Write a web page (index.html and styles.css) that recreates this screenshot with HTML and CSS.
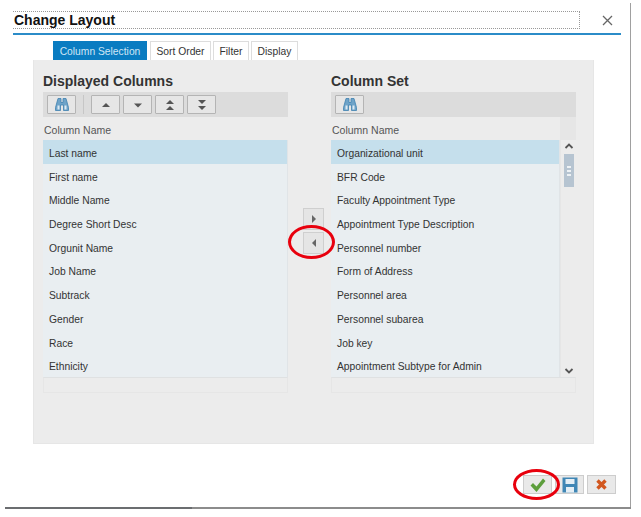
FILE: index.html
```html
<!DOCTYPE html>
<html>

<head>
    <title>Change Layout</title>
    <meta charset="UTF-8">
    <link rel="stylesheet" href="styles.css">
</head>

<body>
    <div class="window">
        <div class="dialog-header">
            <div class="dialog-title">Change Layout</div>
            <svg class="close" width="11" height="11" viewBox="0 0 11 11">
                <path d="M1 1l9 9M10 1l-9 9" stroke="#666" stroke-width="1.3" fill="none" />
            </svg>
        </div>

        <div class="tabs">
            <div class="tab active">Column Selection</div>
            <div class="tab tab-sort">Sort Order</div>
            <div class="tab tab-filter">Filter</div>
            <div class="tab tab-display">Display</div>
        </div>

        <div class="panel">
            <div class="column-box">
                <h2>Displayed Columns</h2>
                <div class="toolbar">
                    <button class="tool"><svg width="14" height="15" viewBox="0 0 14 15"><use href="#binoculars" /></svg></button>
                    <span class="tool-sep"></span>
                    <button class="tool"><svg width="10" height="10" viewBox="0 0 10 10"><path d="M1 7h8L5 3z" fill="#555" /></svg></button>
                    <button class="tool"><svg width="10" height="10" viewBox="0 0 10 10"><path d="M1 3.500h8L5 7.500z" fill="#555" /></svg></button>
                    <button class="tool"><svg width="10" height="12" viewBox="0 0 10 12"><path d="M1 5h8L5 1zM1 11h8L5 7z" fill="#555" /></svg></button>
                    <button class="tool"><svg width="10" height="12" viewBox="0 0 10 12"><path d="M1 1h8L5 5zM1 7h8L5 11z" fill="#555" /></svg></button>
                </div>
                <div class="table">
                    <div class="table-main">
                        <div class="head">Column Name</div>
                        <div class="row selected">Last name</div>
                        <div class="row">First name</div>
                        <div class="row">Middle Name</div>
                        <div class="row">Degree Short Desc</div>
                        <div class="row">Orgunit Name</div>
                        <div class="row">Job Name</div>
                        <div class="row">Subtrack</div>
                        <div class="row">Gender</div>
                        <div class="row">Race</div>
                        <div class="row">Ethnicity</div>
                    </div>
                </div>
                <div class="table-foot"></div>
            </div>

            <div class="move-buttons">
                <button class="move"><svg width="8" height="10" viewBox="0 0 8 10"><path d="M2 1v8l4-4z" fill="#666" /></svg></button>
                <button class="move"><svg width="8" height="10" viewBox="0 0 8 10"><path d="M6 1v8L2 5z" fill="#666" /></svg></button>
            </div>

            <div class="column-box">
                <h2>Column Set</h2>
                <div class="toolbar">
                    <button class="tool"><svg width="14" height="15" viewBox="0 0 14 15"><use href="#binoculars" /></svg></button>
                </div>
                <div class="table">
                    <div class="table-main">
                        <div class="head">Column Name</div>
                        <div class="row selected">Organizational unit</div>
                        <div class="row">BFR Code</div>
                        <div class="row">Faculty Appointment Type</div>
                        <div class="row">Appointment Type Description</div>
                        <div class="row">Personnel number</div>
                        <div class="row">Form of Address</div>
                        <div class="row">Personnel area</div>
                        <div class="row">Personnel subarea</div>
                        <div class="row">Job key</div>
                        <div class="row">Appointment Subtype for Admin</div>
                    </div>
                    <div class="scrollbar">
                        <div class="scroll-head"></div>
                        <svg class="scroll-arrow" width="10" height="6" viewBox="0 0 10 6"><path d="M1.500 5L5 1.500 8.500 5" stroke="#555" stroke-width="1.800" fill="none" /></svg>
                        <div class="scroll-thumb"><span></span><span></span><span></span></div>
                        <svg class="scroll-arrow down" width="10" height="6" viewBox="0 0 10 6"><path d="M1.500 1L5 4.500 8.500 1" stroke="#555" stroke-width="1.800" fill="none" /></svg>
                    </div>
                </div>
                <div class="table-foot"></div>
            </div>
        </div>

        <div class="dialog-footer">
            <button class="action">
                <svg width="16" height="14" viewBox="0 0 16 14"><path d="M0.500 7.500l2.500-2.500 3.500 3.500L13 0.500l2.500 2.500L6.500 14z" fill="#5d9e3c" /></svg>
            </button>
            <button class="action">
                <svg width="16" height="16" viewBox="0 0 16 16">
                    <path d="M0.500 0.500h15v15h-15z" fill="#3f86b5" />
                    <path d="M3.500 2h9v5h-9zM4 10h8v5.500H4z" fill="#e4eef5" />
                </svg>
            </button>
            <button class="action">
                <svg width="13" height="13" viewBox="0 0 13 13"><path d="M2.500 2.500l8 8M10.500 2.500l-8 8" stroke="#d2571f" stroke-width="3.400" fill="none" /></svg>
            </button>
        </div>

        <div class="callout callout-move"></div>
        <div class="callout callout-ok"></div>
    </div>

    <svg width="0" height="0" class="defs">
        <defs>
            <g id="binoculars">
                <path d="M3 1.500h3v4h2v-4h3l2.500 9v3h-5V8h-3v5.500h-5v-3z" fill="#6ea3c8" stroke="#3f82b0" stroke-width="0.800" />
                <path d="M2.500 8.500h2v4h-2zM9.500 8.500h2v4h-2z" fill="#dce9f2" />
            </g>
        </defs>
    </svg>
</body>

</html>
```

FILE: styles.css
```css
html {
    font-size: 10.300px;
    font-family: 'Liberation Sans', Arial, sans-serif;
}

body {
    margin: 0;
    background-color: #fff;
    color: #333;
}

button {
    margin: 0;
    padding: 0;
    font: inherit;
    display: flex;
    align-items: center;
    justify-content: center;
}

.defs {
    position: absolute;
}

.window {
    position: relative;
    box-sizing: border-box;
    width: 631px;
    height: 509px;
    padding: 11px 0 0 13px;
}

/* right edge and bottom shadow of the dialog */
.window::before {
    content: "";
    position: absolute;
    top: 3px;
    right: 0;
    bottom: 2px;
    width: 1px;
    background-color: #a0a0a0;
}

.window::after {
    content: "";
    position: absolute;
    left: 5px;
    right: 0;
    bottom: 0;
    height: 2px;
    background: linear-gradient(to right, #6b6d70 187px, #8c8c8c 187px);
}

.dialog-header {
    display: flex;
    align-items: flex-start;
    width: 608px;
    height: 24px;
    box-sizing: border-box;
    border-bottom: 2px solid #2b8cc8;
}

.dialog-title {
    box-sizing: border-box;
    width: 567px;
    height: 18px;
    line-height: 17px;
    padding-left: 1px;
    font-size: 14px;
    font-weight: bold;
    color: #111;
    border: 1px dotted #999;
    border-left: none;
}

.close {
    margin: 4px 0 0 22px;
}

.tabs {
    display: flex;
    gap: 2px;
    margin: 6px 0 0 40px;
    height: 19px;
}

.tab {
    box-sizing: border-box;
    line-height: 20px;
    text-align: center;
    color: #333;
    border: 1px solid #ddd;
    border-bottom: none;
}

.tab.active {
    width: 94px;
    margin-right: 1px;
    background-color: #0a7cc1;
    border-color: #0a7cc1;
    color: #cfe6f5;
}

.tab-sort {
    width: 61px;
}

.tab-filter {
    width: 36px;
}

.tab-display {
    width: 47px;
}

.panel {
    display: flex;
    align-items: flex-start;
    box-sizing: border-box;
    width: 561px;
    height: 384px;
    margin-left: 20px;
    padding: 12px 0 0 9px;
    background-color: #ececec;
    border: 1px solid #e6e6e6;
    border-width: 0 1px 1px 1px;
}

.column-box {
    flex: none;
    width: 245px;
}

.column-box h2 {
    margin: 0;
    height: 20px;
    line-height: 18px;
    font-size: 14px;
    font-weight: bold;
    color: #333;
}

.toolbar {
    display: flex;
    align-items: center;
    gap: 3px;
    height: 25px;
    padding-left: 3px;
    box-sizing: border-box;
    background-color: #dcdcdc;
}

.tool {
    width: 29px;
    height: 19px;
    background-color: #e6e6e6;
    border: 1px solid #b4b4b4;
    border-radius: 1px;
}

.tool:first-child {
    margin-left: 1px;
}

.tool-sep {
    width: 1px;
    height: 19px;
    margin: 0 4px;
    background-color: #c6c6c6;
}

.table {
    display: flex;
}

.table-main {
    flex: 1;
    min-width: 0;
}

.head {
    height: 23px;
    line-height: 26px;
    padding-left: 1px;
    background-color: #ececec;
    color: #555;
    font-size: 10.500px;
}

.row {
    height: 23.700px;
    line-height: 27px;
    padding-left: 6px;
    background-color: #e9eef1;
    color: #333;
    border-right: 1px solid #e0e4e7;
}

.row.selected {
    background-color: #c5dfec;
}

.table-foot {
    height: 14px;
    border: 1px solid #e6e6e6;
    border-top: 1px solid #dfe1e2;
}

.scrollbar {
    position: relative;
    flex: none;
    width: 15px;
    border-left: 1px solid #e6e6e6;
    display: flex;
    flex-direction: column;
    align-items: center;
}

.scroll-head {
    align-self: stretch;
    height: 23px;
    background-color: #e6e6e6;
}

.scroll-arrow {
    margin-top: 3px;
}

.scroll-arrow.down {
    margin-top: auto;
    margin-bottom: 3px;
}

.scroll-thumb {
    display: flex;
    flex-direction: column;
    align-items: center;
    justify-content: center;
    gap: 2px;
    width: 10px;
    height: 33px;
    margin-top: 5px;
    background-color: #b6c4d1;
}

.scroll-thumb span {
    width: 4px;
    height: 2px;
    background-color: #eef2f5;
}

.move-buttons {
    flex: none;
    display: flex;
    flex-direction: column;
    gap: 2px;
    margin: 136px 7px 0 15px;
}

.move {
    width: 21px;
    height: 22px;
    background-color: #e5e5e5;
    border: 1px solid #cfcfcf;
}

.dialog-footer {
    display: flex;
    gap: 3px;
    justify-content: flex-end;
    width: 603px;
    margin-top: 31px;
}

.action {
    width: 29px;
    height: 19px;
    background-color: #e9e9e9;
    border: 1px solid #cdcdcd;
}

.callout {
    position: absolute;
    box-sizing: border-box;
    border: 3px solid #e8000d;
    border-radius: 50%;
}

.callout-move {
    left: 288px;
    top: 225px;
    width: 47px;
    height: 34px;
}

.callout-ok {
    left: 513px;
    top: 469px;
    width: 47px;
    height: 31px;
}
```
